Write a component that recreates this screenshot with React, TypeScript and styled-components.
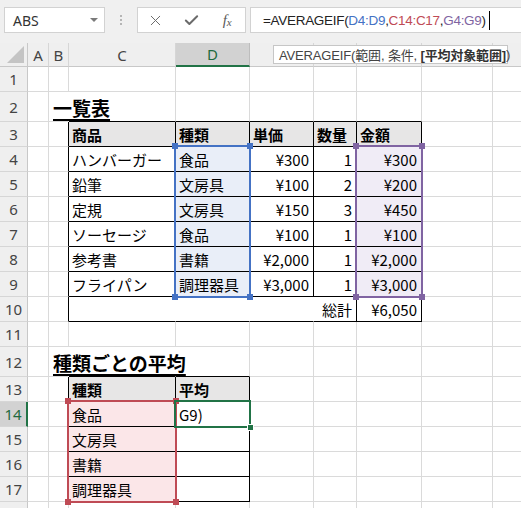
import React from "react";
import styled, { createGlobalStyle } from "styled-components";
import { X, Check } from "lucide-react";

const GlobalStyle = createGlobalStyle`
  html, body { margin: 0; padding: 0; background: #fff; }
  body { font-family: "Noto Sans CJK JP", "Noto Sans", sans-serif; }
`;

// column widths: row header, A..I
const COLS = [28, 21, 20, 107, 74, 64, 43, 65, 71, 71];
// header row, then rows 1..18
const ROWS = [24, 25, 30, 25, 25, 25, 25, 25, 25, 25, 25, 25, 30, 25, 25, 25, 25, 25, 25];
const LETTERS = ["A", "B", "C", "D", "E", "F", "G", "H", "I"];
// headers hidden under the formula tooltip
const HIDDEN_HEADS = new Set(["E", "F", "G", "H", "I"]);

const GRID = "#dadada";
const BLACK = "#000";
const BLUE = "#4472c4";
const PURPLE = "#8064a2";
const RED = "#bf4b55";
const GREEN = "#217346";

type Spec = { text?: string; bold?: boolean; right?: boolean; fill?: string; title?: boolean };

const GRAY_FILL = "#e7e6e6";
const BLUE_FILL = "#e9eef8";
const PURPLE_FILL = "#f0ecf6";
const PINK_FILL = "#fbe6e8";

const items = [
  ["ハンバーガー", "食品", "¥300", "1", "¥300"],
  ["鉛筆", "文房具", "¥100", "2", "¥200"],
  ["定規", "文房具", "¥150", "3", "¥450"],
  ["ソーセージ", "食品", "¥100", "1", "¥100"],
  ["参考書", "書籍", "¥2,000", "1", "¥2,000"],
  ["フライパン", "調理器具", "¥3,000", "1", "¥3,000"],
];

const data: Record<string, Spec> = {};
data["B2"] = { text: "一覧表", title: true };
["商品", "種類", "単価", "数量", "金額"].forEach((t, i) => {
  data[LETTERS[2 + i] + "3"] = { text: t, bold: true, fill: GRAY_FILL };
});
items.forEach((row, r) => {
  row.forEach((t, i) => {
    const col = LETTERS[2 + i];
    data[col + (4 + r)] = {
      text: t,
      right: i >= 2,
      fill: i === 1 ? BLUE_FILL : i === 4 ? PURPLE_FILL : undefined,
    };
  });
});
data["F10"] = { text: "総計", right: true };
data["G10"] = { text: "¥6,050", right: true };
data["B12"] = { text: "種類ごとの平均", title: true };
data["C13"] = { text: "種類", bold: true, fill: GRAY_FILL };
data["D13"] = { text: "平均", bold: true, fill: GRAY_FILL };
["食品", "文房具", "書籍", "調理器具"].forEach((t, i) => {
  data["C" + (14 + i)] = { text: t, fill: PINK_FILL };
});
data["D14"] = { text: "G9)" };

// col: 1 = A
const inTable = (col: number, row: number) =>
  (col >= 3 && col <= 7 && row >= 3 && row <= 10) ||
  (col >= 3 && col <= 4 && row >= 13 && row <= 17);

const hiddenRight = new Set(["B2", "B12", "C12", "C10", "D10", "E10"]);

function rightColor(col: number, row: number) {
  const key = LETTERS[col - 1] + row;
  if (hiddenRight.has(key)) return "transparent";
  if (inTable(col, row) || inTable(col + 1, row)) return BLACK;
  return GRID;
}

function bottomColor(col: number, row: number) {
  if (inTable(col, row) || inTable(col, row + 1)) return BLACK;
  return GRID;
}

export default function App() {
  const cells: React.ReactNode[] = [];
  for (let row = 1; row < ROWS.length; row++) {
    cells.push(
      <RowHead key={"h" + row} $r={row + 1} $active={row === 14}>
        {row < 18 ? row : null}
      </RowHead>
    );
    for (let col = 1; col <= LETTERS.length; col++) {
      const key = LETTERS[col - 1] + row;
      const spec = data[key] || {};
      cells.push(
        <Cell
          key={key}
          $c={col + 1}
          $r={row + 1}
          $right={rightColor(col, row)}
          $bottom={bottomColor(col, row)}
          $fill={spec.fill}
          $bold={spec.bold}
          $alignRight={spec.right}
          $overflow={spec.title}
        >
          {spec.title ? <Title>{spec.text}</Title> : spec.text}
        </Cell>
      );
    }
  }

  return (
    <Page>
      <GlobalStyle />
      <Toolbar>
        <NameBox>
          ABS
          <Caret />
        </NameBox>
        <Grip>
          <span />
          <span />
          <span />
        </Grip>
        <ButtonGroup>
          <ToolButton>
            <X size={17} strokeWidth={1.4} color="#6b6b6b" />
          </ToolButton>
          <ToolButton>
            <Check size={17} strokeWidth={2.8} color="#6b6b6b" />
          </ToolButton>
          <ToolButton>
            <Fx>
              f<sub>x</sub>
            </Fx>
          </ToolButton>
        </ButtonGroup>
        <FormulaBox>
          =AVERAGEIF(<Ref $color={BLUE}>D4:D9</Ref>,<Ref $color={RED}>C14:C17</Ref>,
          <Ref $color={PURPLE}>G4:G9</Ref>)
          <Caret2 />
        </FormulaBox>
      </Toolbar>

      <Sheet>
        <Corner />
        {LETTERS.map((l, i) => (
          <ColHead key={l} $c={i + 2} $active={l === "D"}>
            {HIDDEN_HEADS.has(l) ? null : l}
          </ColHead>
        ))}
        {cells}

        <Range $color={BLUE} $col="5 / 6" $row="5 / 11">
          <Handle $color={BLUE} $v="top" $h="left" />
          <Handle $color={BLUE} $v="top" $h="right" />
          <Handle $color={BLUE} $v="bottom" $h="left" />
          <Handle $color={BLUE} $v="bottom" $h="right" />
        </Range>
        <Range $color={PURPLE} $col="8 / 9" $row="5 / 11">
          <Handle $color={PURPLE} $v="top" $h="left" />
          <Handle $color={PURPLE} $v="top" $h="right" />
          <Handle $color={PURPLE} $v="bottom" $h="left" />
          <Handle $color={PURPLE} $v="bottom" $h="right" />
        </Range>
        <Range $color={RED} $col="4 / 5" $row="15 / 19">
          <Handle $color={RED} $v="top" $h="left" />
          <Handle $color={RED} $v="top" $h="right" />
          <Handle $color={RED} $v="bottom" $h="left" />
          <Handle $color={RED} $v="bottom" $h="right" />
        </Range>
        <ActiveCell>
          <FillHandle />
        </ActiveCell>
      </Sheet>

      <Tooltip>
        AVERAGEIF(範囲, 条件, <b>[平均対象範囲]</b>)
      </Tooltip>
    </Page>
  );
}

const Page = styled.div`
  position: relative;
  width: 521px;
  height: 508px;
  overflow: hidden;
  background: #fff;
`;

const Toolbar = styled.div`
  height: 43px;
  box-sizing: border-box;
  padding-top: 7px;
  background: #f0f0f0;
  display: flex;
  align-items: flex-start;
`;

const NameBox = styled.div`
  margin-left: 4px;
  width: 101px;
  height: 26px;
  box-sizing: border-box;
  background: #fff;
  border: 1px solid #d2d2d2;
  display: flex;
  align-items: center;
  justify-content: space-between;
  padding: 0 6px 0 8px;
  font: 14px "Noto Sans", sans-serif;
  color: #333;
`;

const Caret = styled.span`
  width: 0;
  height: 0;
  border-left: 4px solid transparent;
  border-right: 4px solid transparent;
  border-top: 4px solid #7a7a7a;
`;

const Grip = styled.div`
  width: 32px;
  height: 26px;
  display: flex;
  flex-direction: column;
  align-items: center;
  justify-content: center;
  gap: 2px;

  span {
    width: 2px;
    height: 2px;
    background: #b5b5b5;
  }
`;

const ButtonGroup = styled.div`
  width: 109px;
  height: 26px;
  box-sizing: border-box;
  background: #fff;
  border: 1px solid #d2d2d2;
  display: flex;
`;

const ToolButton = styled.div`
  flex: 1;
  display: flex;
  align-items: center;
  justify-content: center;
`;

const Fx = styled.span`
  font: italic 15px "Liberation Serif", serif;
  color: #5a5a5a;

  sub {
    font-size: 11px;
    vertical-align: -1px;
  }
`;

const FormulaBox = styled.div`
  margin-left: 4px;
  flex: 1;
  height: 26px;
  box-sizing: border-box;
  background: #fff;
  border: 1px solid #d2d2d2;
  border-right: none;
  display: flex;
  align-items: center;
  padding-left: 12px;
  font: 13.5px "Liberation Sans", sans-serif;
  letter-spacing: -0.3px;
  color: #222;
  white-space: nowrap;
`;

const Ref = styled.span<{ $color: string }>`
  color: ${(p) => p.$color};
`;

const Caret2 = styled.span`
  width: 1px;
  height: 19px;
  margin-left: 3px;
  background: #000;
`;

const Sheet = styled.div`
  display: grid;
  grid-template-columns: ${COLS.map((w) => w + "px").join(" ")};
  grid-template-rows: ${ROWS.map((h) => h + "px").join(" ")};
`;

const Corner = styled.div`
  grid-column: 1;
  grid-row: 1;
  position: relative;
  background: #efefef;
  border-right: 1px solid #c8c8c8;
  border-bottom: 1px solid #c8c8c8;

  &::after {
    content: "";
    position: absolute;
    right: 3px;
    bottom: 3px;
    width: 0;
    height: 0;
    border-left: 17px solid transparent;
    border-bottom: 17px solid #c4c4c4;
  }
`;

const ColHead = styled.div<{ $c: number; $active?: boolean }>`
  grid-column: ${(p) => p.$c};
  grid-row: 1;
  box-sizing: border-box;
  background: ${(p) => (p.$active ? "#d2d2d2" : "#efefef")};
  border-right: 1px solid ${(p) => (p.$active ? "#bdbdbd" : "#d6d6d6")};
  border-bottom: ${(p) => (p.$active ? `2px solid ${GREEN}` : "1px solid #c8c8c8")};
  color: ${(p) => (p.$active ? "#1f6a3f" : "#444")};
  display: flex;
  align-items: center;
  justify-content: center;
  font: 15px "Noto Sans", sans-serif;
`;

const RowHead = styled.div<{ $r: number; $active?: boolean }>`
  grid-column: 1;
  grid-row: ${(p) => p.$r};
  box-sizing: border-box;
  background: ${(p) => (p.$active ? "#d2d2d2" : "#efefef")};
  border-right: ${(p) => (p.$active ? `2px solid ${GREEN}` : "1px solid #c8c8c8")};
  border-bottom: 1px solid #d6d6d6;
  color: ${(p) => (p.$active ? "#1f6a3f" : "#444")};
  display: flex;
  align-items: center;
  justify-content: center;
  font: 15px "Noto Sans", sans-serif;
`;

const Cell = styled.div<{
  $c: number;
  $r: number;
  $right: string;
  $bottom: string;
  $fill?: string;
  $bold?: boolean;
  $alignRight?: boolean;
  $overflow?: boolean;
}>`
  grid-column: ${(p) => p.$c};
  grid-row: ${(p) => p.$r};
  box-sizing: border-box;
  min-width: 0;
  border-right: 1px solid ${(p) => p.$right};
  border-bottom: 1px solid ${(p) => p.$bottom};
  background: ${(p) => p.$fill ?? "transparent"};
  display: flex;
  align-items: center;
  justify-content: ${(p) => (p.$alignRight ? "flex-end" : "flex-start")};
  padding: 1px 4px 0 3px;
  font-size: 15px;
  font-weight: ${(p) => (p.$bold ? 700 : 400)};
  color: #000;
  white-space: nowrap;
  overflow: ${(p) => (p.$overflow ? "visible" : "hidden")};
`;

const Title = styled.span`
  font-size: 19px;
  font-weight: 700;
  text-decoration: underline;
  text-decoration-thickness: 2px;
  text-underline-offset: 3px;
  margin-left: 1px;
`;

const Range = styled.div<{ $color: string; $col: string; $row: string }>`
  grid-column: ${(p) => p.$col};
  grid-row: ${(p) => p.$row};
  position: relative;
  z-index: 2;
  margin: -2px -1px -1px -2px;
  border: 2px solid ${(p) => p.$color};
  pointer-events: none;
`;

const Handle = styled.span<{ $color: string; $v: "top" | "bottom"; $h: "left" | "right" }>`
  position: absolute;
  ${(p) => p.$v}: -4px;
  ${(p) => p.$h}: -4px;
  width: 6px;
  height: 6px;
  background: ${(p) => p.$color};
`;

const ActiveCell = styled.div`
  grid-column: 5 / 6;
  grid-row: 15 / 16;
  position: relative;
  z-index: 3;
  margin: -2px -1px -1px -2px;
  border: 2px solid ${GREEN};
  pointer-events: none;
`;

const FillHandle = styled.span`
  position: absolute;
  right: -5px;
  bottom: -5px;
  width: 5px;
  height: 5px;
  background: ${GREEN};
  border: 1px solid #fff;
`;

const Tooltip = styled.div`
  position: absolute;
  left: 273px;
  top: 45px;
  width: 235px;
  height: 19px;
  box-sizing: border-box;
  background: #fff;
  border: 1px solid #c6c6c6;
  display: flex;
  align-items: center;
  padding-left: 5px;
  font: 13px "Liberation Sans", "Noto Sans CJK JP", sans-serif;
  letter-spacing: -0.15px;
  color: #444;
  white-space: pre;
  z-index: 5;

  b {
    font-weight: 700;
    color: #333;
  }
`;
